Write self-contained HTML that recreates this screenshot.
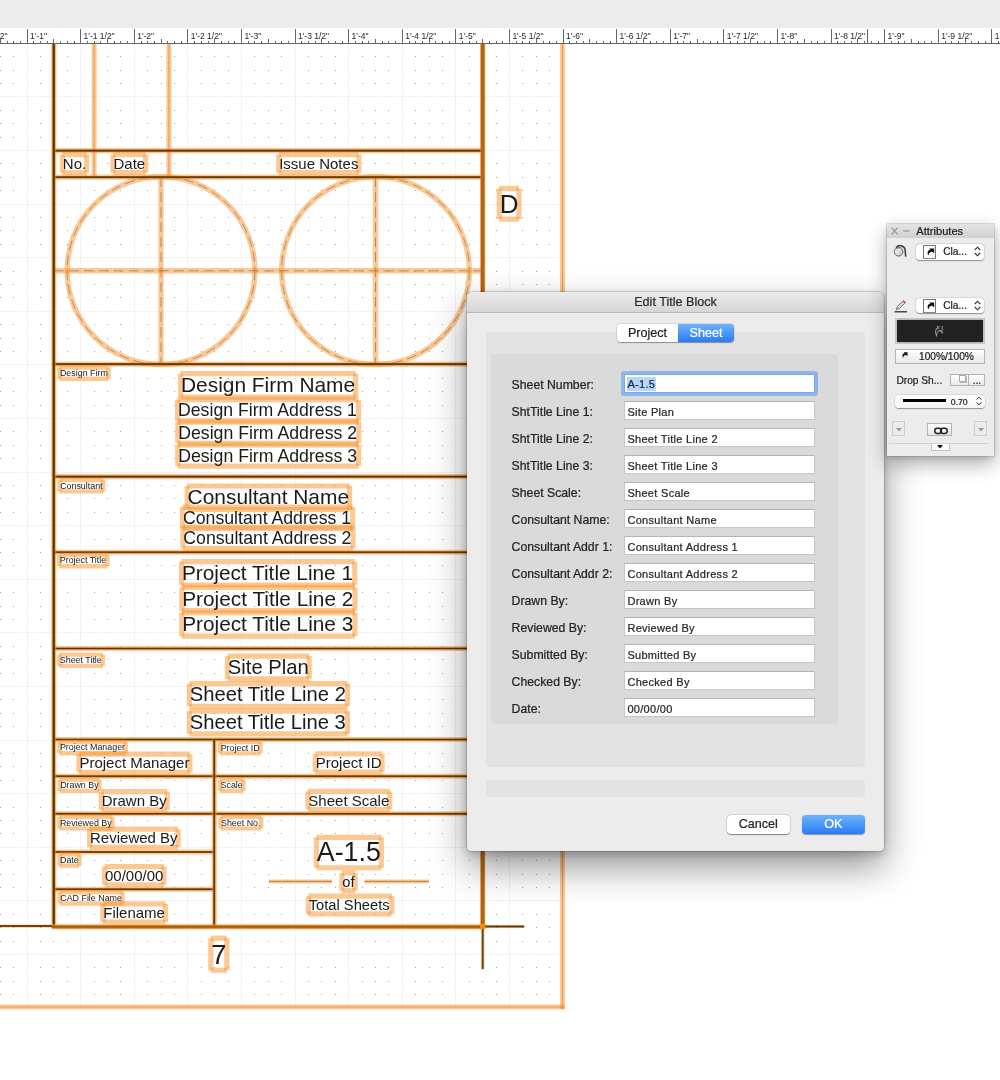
<!DOCTYPE html>
<html><head><meta charset="utf-8"><title>Edit Title Block</title>
<style>
html,body{margin:0;padding:0;background:#fff;}
body{width:1000px;height:1080px;position:relative;overflow:hidden;font-family:"Liberation Sans",sans-serif;color:#222;}
.cv{position:absolute;left:0;top:0;display:block;will-change:transform}
.dlg,.ap{will-change:transform;-webkit-text-stroke:0.22px currentColor}
.dlg{position:absolute;left:467px;top:292px;width:417px;height:559px;background:#ececec;border-radius:5px 5px 4px 4px;box-shadow:0 0 0 0.5px rgba(0,0,0,.3),0 16px 36px rgba(0,0,0,.42),0 3px 10px rgba(0,0,0,.2);}
.dlg .tb{position:absolute;left:0;top:0;right:0;height:19.5px;border-radius:5px 5px 0 0;background:linear-gradient(#ebebeb,#d6d6d6);border-bottom:1px solid #b9b9b9;text-align:center;font-size:12.6px;line-height:21px;color:#2a2a2a}
.g1{position:absolute;left:18.5px;top:40px;width:379px;height:434.5px;background:#e3e3e3;border-radius:4px}
.g2{position:absolute;left:24.3px;top:62.1px;width:347px;height:370.3px;background:#dadada;border-radius:4px}
.g3{position:absolute;left:18.5px;top:488px;width:379px;height:17px;background:#e3e3e3;border-radius:4px}
.tabs{position:absolute;left:150px;top:32px;height:18px;display:flex;font-size:12.6px;line-height:18px;border-radius:4px;box-shadow:0 0.5px 1px rgba(0,0,0,.35),0 0 0 0.5px rgba(0,0,0,.12)}
.tabs div{text-align:center}
.t1{width:61px;background:#fff;border-radius:4px 0 0 4px;color:#222}
.t2{width:56px;background:linear-gradient(#6db3fb,#2b7bf5);border-radius:0 4px 4px 0;color:#fff}
.lb{position:absolute;left:44.6px;font-size:12.25px;line-height:17.4px;white-space:nowrap;color:#222}
.in{position:absolute;left:157px;width:186.6px;height:17px;border:1px solid #c6c6c6;border-top-color:#b4b4b4;background:#fff;font-size:11px;letter-spacing:0.3px;line-height:20.4px;overflow:hidden;padding-left:2.4px;white-space:nowrap;color:#262626}
.foc{left:157px;width:186.6px;height:17px;border-color:#7aa7e6;box-shadow:0 0 0 3px #8fb6ea;border-radius:1px}
.sel{background:#b3d7ff;display:inline-block;line-height:14.5px;padding:0 0.5px;margin-left:-0.5px;vertical-align:top;margin-top:1.6px}
.btn{position:absolute;top:523px;height:18.5px;border-radius:4px;font-size:12.6px;line-height:18.5px;text-align:center}
.b1{left:260px;width:62.5px;background:#fff;box-shadow:0 0.5px 1px rgba(0,0,0,.4),0 0 0 0.5px rgba(0,0,0,.14);color:#222}
.b2{left:334.5px;width:63.5px;background:linear-gradient(#6db3fb,#2b7bf5);color:#fff;box-shadow:0 0.5px 1px rgba(0,0,40,.4)}
.ap{position:absolute;left:886.6px;top:223.7px;width:107px;height:232.3px;background:#ececec;box-shadow:0 0 0 0.5px rgba(0,0,0,.22),0 8px 18px rgba(0,0,0,.32),0 2px 6px rgba(0,0,0,.12);font-size:10.4px;color:#222}
.atb{position:absolute;left:0;top:0;right:0;height:14px;background:linear-gradient(#e4e4e4,#d0d0d0);}
.atb span{position:absolute;left:29.3px;top:0;font-size:11.1px;line-height:14.2px;color:#1e1e1e}
.ic{position:absolute}
.dd{position:absolute;left:29.1px;width:67.5px;height:15.6px;background:#fff;border-radius:3.5px;box-shadow:0 0.5px 1px rgba(0,0,0,.35),0 0 0 0.5px rgba(0,0,0,.1)}
.dd .cb{position:absolute;left:7px;top:1.4px;width:11.4px;height:11.6px;border:0.8px solid #777;border-bottom:1.2px solid #888;background:#fff;display:block}
.dd .cb svg{position:absolute;left:-0.4px;top:-0.4px}
.dd b{position:absolute;left:27.1px;top:0;font-weight:normal;font-size:10.2px;line-height:16px;color:#222}
.dd .ch{position:absolute;left:58.2px;top:2.4px}
.blk{position:absolute;left:7.8px;top:93.6px;width:88.3px;height:24.1px;border:1px solid #c4c4c4;background:#222;box-shadow:inset 0 0 0 0.8px #e6e6e6}
.pct{position:absolute;left:7.8px;top:124.8px;width:88.3px;height:12.8px;border:1px solid #b3b3b3;background:linear-gradient(#fff,#e9e9e9)}
.pct span{position:absolute;left:23.2px;top:0;font-size:10.2px;line-height:13.4px;color:#1c1c1c}
.ds{position:absolute;left:9.4px;top:150.5px;font-size:10.2px;line-height:12px;white-space:nowrap}
.dsb{position:absolute;left:63.4px;top:149.6px;width:32.7px;height:10.2px;border:1px solid #b3b3b3;background:linear-gradient(#fff,#e9e9e9)}
.dsb i{position:absolute;left:7.6px;top:0.8px;width:4.6px;height:4.6px;background:#fff;border:0.7px solid #aaa;box-shadow:1px 1px 0 #bbb}
.dsb u{position:absolute;left:16.8px;top:0;width:1px;height:10.2px;background:#b3b3b3}
.dsb b{position:absolute;left:21.4px;top:0.2px;font-weight:normal;font-size:10px;line-height:12px}
.lw{position:absolute;left:7.8px;top:170.9px;width:90.1px;height:13px;background:linear-gradient(#fff,#f4f4f4);border-radius:4px;box-shadow:0 0.5px 1px rgba(0,0,0,.35),0 0 0 0.5px rgba(0,0,0,.1)}
.lw i{position:absolute;left:8.5px;top:4.6px;width:43.1px;height:3px;background:#000}
.lw b{position:absolute;left:56px;top:0;font-weight:normal;font-size:8.7px;line-height:14.2px}
.lw .ch2{position:absolute;left:81.6px;top:1.6px}
.bb{position:absolute;border:1px solid #ccc;background:#ececec;box-sizing:border-box}
.sep{position:absolute;left:2.4px;right:4.6px;top:219.4px;height:1px;background:#d2d2d2}
.sb{position:absolute;left:44.4px;top:219.5px;width:16.8px;height:6.2px;border:0.8px solid #c2c2c2;border-top:none;background:#fff}
</style></head><body>
<svg class="cv" width="1000" height="1080" viewBox="0 0 1000 1080" font-family="'Liberation Sans', sans-serif">
<defs>
<clipPath id="pg"><rect x="0" y="44" width="562.5" height="963"/></clipPath>
<g id="r" fill="#a6a6a6"><rect x="0" y="0" width="1" height="1"/><rect x="13" y="0" width="1" height="1"/><rect x="27" y="0" width="1" height="1" fill="#e2e2e2"/><rect x="40" y="0" width="1" height="1"/><rect x="53" y="0" width="1" height="1"/><rect x="67" y="0" width="1" height="1"/><rect x="80" y="0" width="1" height="1" fill="#e2e2e2"/><rect x="94" y="0" width="1" height="1"/><rect x="107" y="0" width="1" height="1"/><rect x="120" y="0" width="1" height="1"/><rect x="134" y="0" width="1" height="1" fill="#e2e2e2"/><rect x="147" y="0" width="1" height="1"/><rect x="161" y="0" width="1" height="1"/><rect x="174" y="0" width="1" height="1"/><rect x="187" y="0" width="1" height="1" fill="#e2e2e2"/><rect x="201" y="0" width="1" height="1"/><rect x="214" y="0" width="1" height="1"/><rect x="228" y="0" width="1" height="1"/><rect x="241" y="0" width="1" height="1" fill="#e2e2e2"/><rect x="254" y="0" width="1" height="1"/><rect x="268" y="0" width="1" height="1"/><rect x="281" y="0" width="1" height="1"/><rect x="295" y="0" width="1" height="1" fill="#e2e2e2"/><rect x="308" y="0" width="1" height="1"/><rect x="321" y="0" width="1" height="1"/><rect x="335" y="0" width="1" height="1"/><rect x="348" y="0" width="1" height="1" fill="#e2e2e2"/><rect x="362" y="0" width="1" height="1"/><rect x="375" y="0" width="1" height="1"/><rect x="388" y="0" width="1" height="1"/><rect x="402" y="0" width="1" height="1" fill="#e2e2e2"/><rect x="415" y="0" width="1" height="1"/><rect x="429" y="0" width="1" height="1"/><rect x="442" y="0" width="1" height="1"/><rect x="455" y="0" width="1" height="1" fill="#e2e2e2"/><rect x="469" y="0" width="1" height="1"/><rect x="482" y="0" width="1" height="1"/><rect x="496" y="0" width="1" height="1"/><rect x="509" y="0" width="1" height="1" fill="#e2e2e2"/><rect x="522" y="0" width="1" height="1"/><rect x="536" y="0" width="1" height="1"/><rect x="549" y="0" width="1" height="1"/></g><g id="rm" fill="#e4e4e4"><rect x="0" y="0" width="1" height="1"/><rect x="13" y="0" width="1" height="1"/><rect x="27" y="0" width="1" height="1"/><rect x="40" y="0" width="1" height="1"/><rect x="53" y="0" width="1" height="1"/><rect x="67" y="0" width="1" height="1"/><rect x="80" y="0" width="1" height="1"/><rect x="94" y="0" width="1" height="1"/><rect x="107" y="0" width="1" height="1"/><rect x="120" y="0" width="1" height="1"/><rect x="134" y="0" width="1" height="1"/><rect x="147" y="0" width="1" height="1"/><rect x="161" y="0" width="1" height="1"/><rect x="174" y="0" width="1" height="1"/><rect x="187" y="0" width="1" height="1"/><rect x="201" y="0" width="1" height="1"/><rect x="214" y="0" width="1" height="1"/><rect x="228" y="0" width="1" height="1"/><rect x="241" y="0" width="1" height="1"/><rect x="254" y="0" width="1" height="1"/><rect x="268" y="0" width="1" height="1"/><rect x="281" y="0" width="1" height="1"/><rect x="295" y="0" width="1" height="1"/><rect x="308" y="0" width="1" height="1"/><rect x="321" y="0" width="1" height="1"/><rect x="335" y="0" width="1" height="1"/><rect x="348" y="0" width="1" height="1"/><rect x="362" y="0" width="1" height="1"/><rect x="375" y="0" width="1" height="1"/><rect x="388" y="0" width="1" height="1"/><rect x="402" y="0" width="1" height="1"/><rect x="415" y="0" width="1" height="1"/><rect x="429" y="0" width="1" height="1"/><rect x="442" y="0" width="1" height="1"/><rect x="455" y="0" width="1" height="1"/><rect x="469" y="0" width="1" height="1"/><rect x="482" y="0" width="1" height="1"/><rect x="496" y="0" width="1" height="1"/><rect x="509" y="0" width="1" height="1"/><rect x="522" y="0" width="1" height="1"/><rect x="536" y="0" width="1" height="1"/><rect x="549" y="0" width="1" height="1"/></g>
</defs>
<rect x="0" y="0" width="1000" height="1080" fill="#fff"/>
<g clip-path="url(#pg)" shape-rendering="crispEdges">
<g fill="#f4f4f4"><rect x="27" y="44" width="1" height="964"/><rect x="80" y="44" width="1" height="964"/><rect x="134" y="44" width="1" height="964"/><rect x="187" y="44" width="1" height="964"/><rect x="241" y="44" width="1" height="964"/><rect x="295" y="44" width="1" height="964"/><rect x="348" y="44" width="1" height="964"/><rect x="402" y="44" width="1" height="964"/><rect x="455" y="44" width="1" height="964"/><rect x="509" y="44" width="1" height="964"/><rect x="0" y="96" width="563" height="1"/><rect x="0" y="150" width="563" height="1"/><rect x="0" y="204" width="563" height="1"/><rect x="0" y="257" width="563" height="1"/><rect x="0" y="311" width="563" height="1"/><rect x="0" y="364" width="563" height="1"/><rect x="0" y="418" width="563" height="1"/><rect x="0" y="472" width="563" height="1"/><rect x="0" y="525" width="563" height="1"/><rect x="0" y="579" width="563" height="1"/><rect x="0" y="632" width="563" height="1"/><rect x="0" y="686" width="563" height="1"/><rect x="0" y="740" width="563" height="1"/><rect x="0" y="793" width="563" height="1"/><rect x="0" y="847" width="563" height="1"/><rect x="0" y="900" width="563" height="1"/><rect x="0" y="954" width="563" height="1"/></g>
<use href="#r" y="56"/><use href="#r" y="70"/><use href="#r" y="83"/><use href="#rm" y="96"/><use href="#r" y="110"/><use href="#r" y="123"/><use href="#r" y="137"/><use href="#rm" y="150"/><use href="#r" y="163"/><use href="#r" y="177"/><use href="#r" y="190"/><use href="#rm" y="204"/><use href="#r" y="217"/><use href="#r" y="230"/><use href="#r" y="244"/><use href="#rm" y="257"/><use href="#r" y="271"/><use href="#r" y="284"/><use href="#r" y="297"/><use href="#rm" y="311"/><use href="#r" y="324"/><use href="#r" y="338"/><use href="#r" y="351"/><use href="#rm" y="364"/><use href="#r" y="378"/><use href="#r" y="391"/><use href="#r" y="405"/><use href="#rm" y="418"/><use href="#r" y="431"/><use href="#r" y="445"/><use href="#r" y="458"/><use href="#rm" y="472"/><use href="#r" y="485"/><use href="#r" y="498"/><use href="#r" y="512"/><use href="#rm" y="525"/><use href="#r" y="539"/><use href="#r" y="552"/><use href="#r" y="565"/><use href="#rm" y="579"/><use href="#r" y="592"/><use href="#r" y="606"/><use href="#r" y="619"/><use href="#rm" y="632"/><use href="#r" y="646"/><use href="#r" y="659"/><use href="#r" y="673"/><use href="#rm" y="686"/><use href="#r" y="699"/><use href="#r" y="713"/><use href="#r" y="726"/><use href="#rm" y="740"/><use href="#r" y="753"/><use href="#r" y="766"/><use href="#r" y="780"/><use href="#rm" y="793"/><use href="#r" y="807"/><use href="#r" y="820"/><use href="#r" y="833"/><use href="#rm" y="847"/><use href="#r" y="860"/><use href="#r" y="874"/><use href="#r" y="887"/><use href="#rm" y="900"/><use href="#r" y="914"/><use href="#r" y="927"/><use href="#r" y="941"/><use href="#rm" y="954"/><use href="#r" y="967"/><use href="#r" y="981"/><use href="#r" y="994"/>
</g>
<line x1="562.5" y1="43.5" x2="562.5" y2="1009" stroke="#f9932b" stroke-opacity="0.5" stroke-width="5"/>
<line x1="562.5" y1="43.5" x2="562.5" y2="1009" stroke="#d98a3a" stroke-opacity="0.7" stroke-width="1"/>
<line x1="0" y1="1007" x2="564.5" y2="1007" stroke="#f9932b" stroke-opacity="0.5" stroke-width="5"/>
<line x1="0" y1="1007" x2="564.5" y2="1007" stroke="#d98a3a" stroke-opacity="0.7" stroke-width="1"/>
<line x1="94.1" y1="43.5" x2="94.1" y2="177.2" stroke="#f9932b" stroke-opacity="0.5" stroke-width="5"/>
<line x1="94.1" y1="43.5" x2="94.1" y2="177.2" stroke="#d98a3a" stroke-opacity="0.7" stroke-width="1"/>
<line x1="168.9" y1="43.5" x2="168.9" y2="177.2" stroke="#f9932b" stroke-opacity="0.5" stroke-width="5"/>
<line x1="168.9" y1="43.5" x2="168.9" y2="177.2" stroke="#d98a3a" stroke-opacity="0.7" stroke-width="1"/>
<circle cx="161" cy="270.6" r="93.9" fill="none" stroke="#f9932b" stroke-opacity="0.5" stroke-width="5.4"/>
<circle cx="161" cy="270.6" r="93.9" fill="none" stroke="#7a6548" stroke-opacity="0.75" stroke-width="0.8" stroke-dasharray="10 5"/>
<line x1="161" y1="177.2" x2="161" y2="364.1" stroke="#f9932b" stroke-opacity="0.5" stroke-width="5.4"/>
<line x1="161" y1="177.2" x2="161" y2="364.1" stroke="#7a6548" stroke-opacity="0.75" stroke-width="0.8" stroke-dasharray="10 5"/>
<circle cx="375.5" cy="270.6" r="93.9" fill="none" stroke="#f9932b" stroke-opacity="0.5" stroke-width="5.4"/>
<circle cx="375.5" cy="270.6" r="93.9" fill="none" stroke="#7a6548" stroke-opacity="0.75" stroke-width="0.8" stroke-dasharray="10 5"/>
<line x1="375.5" y1="177.2" x2="375.5" y2="364.1" stroke="#f9932b" stroke-opacity="0.5" stroke-width="5.4"/>
<line x1="375.5" y1="177.2" x2="375.5" y2="364.1" stroke="#7a6548" stroke-opacity="0.75" stroke-width="0.8" stroke-dasharray="10 5"/>
<line x1="53.75" y1="270.8" x2="482.5" y2="270.8" stroke="#f9932b" stroke-opacity="0.5" stroke-width="5.4"/>
<line x1="53.75" y1="270.8" x2="482.5" y2="270.8" stroke="#7a6548" stroke-opacity="0.75" stroke-width="0.8" stroke-dasharray="10 5"/>
<line x1="268.75" y1="881.4" x2="332" y2="881.4" stroke="#f9932b" stroke-opacity="0.5" stroke-width="4"/>
<line x1="268.75" y1="881.4" x2="332" y2="881.4" stroke="#a06a2a" stroke-opacity="0.85" stroke-width="0.9"/>
<line x1="364.5" y1="881.4" x2="428.75" y2="881.4" stroke="#f9932b" stroke-opacity="0.5" stroke-width="4"/>
<line x1="364.5" y1="881.4" x2="428.75" y2="881.4" stroke="#a06a2a" stroke-opacity="0.85" stroke-width="0.9"/>
<line x1="53.75" y1="150.6" x2="482.5" y2="150.6" stroke="#f9932b" stroke-opacity="0.5" stroke-width="5.2"/>
<line x1="53.75" y1="150.6" x2="482.5" y2="150.6" stroke="#96560f" stroke-width="2.1"/>
<line x1="53.75" y1="150.6" x2="482.5" y2="150.6" stroke="#5a3407" stroke-width="1.16"/>
<line x1="53.75" y1="177.2" x2="482.5" y2="177.2" stroke="#f9932b" stroke-opacity="0.5" stroke-width="5.2"/>
<line x1="53.75" y1="177.2" x2="482.5" y2="177.2" stroke="#96560f" stroke-width="2.1"/>
<line x1="53.75" y1="177.2" x2="482.5" y2="177.2" stroke="#5a3407" stroke-width="1.16"/>
<line x1="53.75" y1="364.1" x2="482.5" y2="364.1" stroke="#f9932b" stroke-opacity="0.5" stroke-width="5.2"/>
<line x1="53.75" y1="364.1" x2="482.5" y2="364.1" stroke="#96560f" stroke-width="2.1"/>
<line x1="53.75" y1="364.1" x2="482.5" y2="364.1" stroke="#5a3407" stroke-width="1.16"/>
<line x1="53.75" y1="476.6" x2="482.5" y2="476.6" stroke="#f9932b" stroke-opacity="0.5" stroke-width="5.2"/>
<line x1="53.75" y1="476.6" x2="482.5" y2="476.6" stroke="#96560f" stroke-width="2.1"/>
<line x1="53.75" y1="476.6" x2="482.5" y2="476.6" stroke="#5a3407" stroke-width="1.16"/>
<line x1="53.75" y1="552.25" x2="482.5" y2="552.25" stroke="#f9932b" stroke-opacity="0.5" stroke-width="5.2"/>
<line x1="53.75" y1="552.25" x2="482.5" y2="552.25" stroke="#96560f" stroke-width="2.1"/>
<line x1="53.75" y1="552.25" x2="482.5" y2="552.25" stroke="#5a3407" stroke-width="1.16"/>
<line x1="53.75" y1="648.5" x2="482.5" y2="648.5" stroke="#f9932b" stroke-opacity="0.5" stroke-width="5.2"/>
<line x1="53.75" y1="648.5" x2="482.5" y2="648.5" stroke="#96560f" stroke-width="2.1"/>
<line x1="53.75" y1="648.5" x2="482.5" y2="648.5" stroke="#5a3407" stroke-width="1.16"/>
<line x1="53.75" y1="739.5" x2="482.5" y2="739.5" stroke="#f9932b" stroke-opacity="0.5" stroke-width="5.2"/>
<line x1="53.75" y1="739.5" x2="482.5" y2="739.5" stroke="#96560f" stroke-width="2.1"/>
<line x1="53.75" y1="739.5" x2="482.5" y2="739.5" stroke="#5a3407" stroke-width="1.16"/>
<line x1="53.75" y1="776.25" x2="482.5" y2="776.25" stroke="#f9932b" stroke-opacity="0.5" stroke-width="5.2"/>
<line x1="53.75" y1="776.25" x2="482.5" y2="776.25" stroke="#96560f" stroke-width="2.1"/>
<line x1="53.75" y1="776.25" x2="482.5" y2="776.25" stroke="#5a3407" stroke-width="1.16"/>
<line x1="53.75" y1="813.75" x2="482.5" y2="813.75" stroke="#f9932b" stroke-opacity="0.5" stroke-width="5.2"/>
<line x1="53.75" y1="813.75" x2="482.5" y2="813.75" stroke="#96560f" stroke-width="2.1"/>
<line x1="53.75" y1="813.75" x2="482.5" y2="813.75" stroke="#5a3407" stroke-width="1.16"/>
<line x1="53.75" y1="852" x2="214.25" y2="852" stroke="#f9932b" stroke-opacity="0.5" stroke-width="5.2"/>
<line x1="53.75" y1="852" x2="214.25" y2="852" stroke="#96560f" stroke-width="2.1"/>
<line x1="53.75" y1="852" x2="214.25" y2="852" stroke="#5a3407" stroke-width="1.16"/>
<line x1="53.75" y1="889.25" x2="214.25" y2="889.25" stroke="#f9932b" stroke-opacity="0.5" stroke-width="5.2"/>
<line x1="53.75" y1="889.25" x2="214.25" y2="889.25" stroke="#96560f" stroke-width="2.1"/>
<line x1="53.75" y1="889.25" x2="214.25" y2="889.25" stroke="#5a3407" stroke-width="1.16"/>
<line x1="214.25" y1="739.5" x2="214.25" y2="926.5" stroke="#f9932b" stroke-opacity="0.5" stroke-width="5.2"/>
<line x1="214.25" y1="739.5" x2="214.25" y2="926.5" stroke="#96560f" stroke-width="2.1"/>
<line x1="214.25" y1="739.5" x2="214.25" y2="926.5" stroke="#5a3407" stroke-width="1.16"/>
<line x1="53.75" y1="43.5" x2="53.75" y2="928.0" stroke="#f9932b" stroke-opacity="0.5" stroke-width="5.2"/>
<line x1="53.75" y1="43.5" x2="53.75" y2="928.0" stroke="#96560f" stroke-width="2.8"/>
<line x1="53.75" y1="43.5" x2="53.75" y2="928.0" stroke="#5a3407" stroke-width="1.54"/>
<line x1="482.7" y1="43.5" x2="482.7" y2="928.0" stroke="#f9932b" stroke-opacity="0.5" stroke-width="5.4"/>
<line x1="482.7" y1="43.5" x2="482.7" y2="928.0" stroke="#b1660f" stroke-width="3.9"/>
<line x1="0" y1="926.1" x2="53.75" y2="926.1" stroke="#f9932b" stroke-opacity="0.35" stroke-width="3.6"/>
<line x1="0" y1="926.1" x2="53.75" y2="926.1" stroke="#6e440e" stroke-width="2"/>
<line x1="51.75" y1="926.8" x2="484.5" y2="926.8" stroke="#f9932b" stroke-opacity="0.5" stroke-width="5.6"/>
<line x1="51.75" y1="926.8" x2="484.5" y2="926.8" stroke="#c06e0c" stroke-width="3.2"/>
<line x1="51.75" y1="926.8" x2="484.5" y2="926.8" stroke="#a85c0a" stroke-width="1.4"/>
<line x1="484.5" y1="926.5" x2="523.5" y2="926.5" stroke="#f9932b" stroke-opacity="0.35" stroke-width="3.6"/>
<line x1="484.5" y1="926.5" x2="523.5" y2="926.5" stroke="#5e3a0c" stroke-width="2" stroke-linecap="round"/>
<line x1="482.7" y1="928.5" x2="482.7" y2="968.5" stroke="#f9932b" stroke-opacity="0.35" stroke-width="3.6"/>
<line x1="482.7" y1="928.5" x2="482.7" y2="968.5" stroke="#6e440e" stroke-width="2" stroke-linecap="round"/>
<rect x="480.1" y="923.9" width="5.2" height="5.2" fill="#f08a10"/>
<g stroke="#f9932b" stroke-opacity="0.5" stroke-width="5.2"><line x1="62.40" y1="154.63" x2="86.64" y2="154.63"/><line x1="62.40" y1="172.68" x2="86.64" y2="172.68"/><line x1="62.40" y1="154.63" x2="62.40" y2="172.68"/><line x1="86.64" y1="154.63" x2="86.64" y2="172.68"/><line x1="113.07" y1="154.63" x2="145.66" y2="154.63"/><line x1="113.07" y1="172.68" x2="145.66" y2="172.68"/><line x1="113.07" y1="154.63" x2="113.07" y2="172.68"/><line x1="145.66" y1="154.63" x2="145.66" y2="172.68"/><line x1="278.78" y1="154.63" x2="358.88" y2="154.63"/><line x1="278.78" y1="172.68" x2="358.88" y2="172.68"/><line x1="278.78" y1="154.63" x2="278.78" y2="172.68"/><line x1="358.88" y1="154.63" x2="358.88" y2="172.68"/><line x1="499.26" y1="188.41" x2="518.93" y2="188.41"/><line x1="499.26" y1="219.11" x2="518.93" y2="219.11"/><line x1="499.26" y1="188.41" x2="499.26" y2="219.11"/><line x1="518.93" y1="188.41" x2="518.93" y2="219.11"/><line x1="180.61" y1="373.65" x2="355.69" y2="373.65"/><line x1="180.61" y1="397.13" x2="355.69" y2="397.13"/><line x1="180.61" y1="373.65" x2="180.61" y2="397.13"/><line x1="355.69" y1="373.65" x2="355.69" y2="397.13"/><line x1="177.61" y1="399.65" x2="358.49" y2="399.65"/><line x1="177.61" y1="420.80" x2="358.49" y2="420.80"/><line x1="177.61" y1="399.65" x2="177.61" y2="420.80"/><line x1="358.49" y1="399.65" x2="358.49" y2="420.80"/><line x1="177.83" y1="422.15" x2="358.71" y2="422.15"/><line x1="177.83" y1="443.30" x2="358.71" y2="443.30"/><line x1="177.83" y1="422.15" x2="177.83" y2="443.30"/><line x1="358.71" y1="422.15" x2="358.71" y2="443.30"/><line x1="177.77" y1="445.00" x2="358.64" y2="445.00"/><line x1="177.77" y1="466.15" x2="358.64" y2="466.15"/><line x1="177.77" y1="445.00" x2="177.77" y2="466.15"/><line x1="358.64" y1="445.00" x2="358.64" y2="466.15"/><line x1="187.21" y1="486.00" x2="349.56" y2="486.00"/><line x1="187.21" y1="509.48" x2="349.56" y2="509.48"/><line x1="187.21" y1="486.00" x2="187.21" y2="509.48"/><line x1="349.56" y1="486.00" x2="349.56" y2="509.48"/><line x1="182.59" y1="507.15" x2="352.68" y2="507.15"/><line x1="182.59" y1="528.30" x2="352.68" y2="528.30"/><line x1="182.59" y1="507.15" x2="182.59" y2="528.30"/><line x1="352.68" y1="507.15" x2="352.68" y2="528.30"/><line x1="182.90" y1="527.15" x2="353.00" y2="527.15"/><line x1="182.90" y1="548.30" x2="353.00" y2="548.30"/><line x1="182.90" y1="527.15" x2="182.90" y2="548.30"/><line x1="353.00" y1="527.15" x2="353.00" y2="548.30"/><line x1="181.53" y1="561.64" x2="354.66" y2="561.64"/><line x1="181.53" y1="585.01" x2="354.66" y2="585.01"/><line x1="181.53" y1="561.64" x2="181.53" y2="585.01"/><line x1="354.66" y1="561.64" x2="354.66" y2="585.01"/><line x1="181.86" y1="587.34" x2="354.98" y2="587.34"/><line x1="181.86" y1="610.71" x2="354.98" y2="610.71"/><line x1="181.86" y1="587.34" x2="181.86" y2="610.71"/><line x1="354.98" y1="587.34" x2="354.98" y2="610.71"/><line x1="181.78" y1="612.84" x2="354.91" y2="612.84"/><line x1="181.78" y1="636.21" x2="354.91" y2="636.21"/><line x1="181.78" y1="612.84" x2="181.78" y2="636.21"/><line x1="354.91" y1="612.84" x2="354.91" y2="636.21"/><line x1="227.47" y1="656.12" x2="309.21" y2="656.12"/><line x1="227.47" y1="678.83" x2="309.21" y2="678.83"/><line x1="227.47" y1="656.12" x2="227.47" y2="678.83"/><line x1="309.21" y1="656.12" x2="309.21" y2="678.83"/><line x1="189.46" y1="683.62" x2="347.54" y2="683.62"/><line x1="189.46" y1="706.33" x2="347.54" y2="706.33"/><line x1="189.46" y1="683.62" x2="189.46" y2="706.33"/><line x1="347.54" y1="683.62" x2="347.54" y2="706.33"/><line x1="189.39" y1="711.12" x2="347.47" y2="711.12"/><line x1="189.39" y1="733.83" x2="347.47" y2="733.83"/><line x1="189.39" y1="711.12" x2="189.39" y2="733.83"/><line x1="347.47" y1="711.12" x2="347.47" y2="733.83"/><line x1="78.98" y1="754.18" x2="189.93" y2="754.18"/><line x1="78.98" y1="772.23" x2="189.93" y2="772.23"/><line x1="78.98" y1="754.18" x2="78.98" y2="772.23"/><line x1="189.93" y1="754.18" x2="189.93" y2="772.23"/><line x1="315.31" y1="753.93" x2="382.06" y2="753.93"/><line x1="315.31" y1="771.98" x2="382.06" y2="771.98"/><line x1="315.31" y1="753.93" x2="315.31" y2="771.98"/><line x1="382.06" y1="753.93" x2="382.06" y2="771.98"/><line x1="101.29" y1="791.68" x2="167.20" y2="791.68"/><line x1="101.29" y1="809.73" x2="167.20" y2="809.73"/><line x1="101.29" y1="791.68" x2="101.29" y2="809.73"/><line x1="167.20" y1="791.68" x2="167.20" y2="809.73"/><line x1="307.95" y1="791.43" x2="389.73" y2="791.43"/><line x1="307.95" y1="809.48" x2="389.73" y2="809.48"/><line x1="307.95" y1="791.43" x2="307.95" y2="809.48"/><line x1="389.73" y1="791.43" x2="389.73" y2="809.48"/><line x1="89.64" y1="829.18" x2="178.06" y2="829.18"/><line x1="89.64" y1="847.23" x2="178.06" y2="847.23"/><line x1="89.64" y1="829.18" x2="89.64" y2="847.23"/><line x1="178.06" y1="829.18" x2="178.06" y2="847.23"/><line x1="316.40" y1="837.40" x2="381.35" y2="837.40"/><line x1="316.40" y1="867.73" x2="381.35" y2="867.73"/><line x1="316.40" y1="837.40" x2="316.40" y2="867.73"/><line x1="381.35" y1="837.40" x2="381.35" y2="867.73"/><line x1="341.95" y1="872.96" x2="355.11" y2="872.96"/><line x1="341.95" y1="890.67" x2="355.11" y2="890.67"/><line x1="341.95" y1="872.96" x2="341.95" y2="890.67"/><line x1="355.11" y1="872.96" x2="355.11" y2="890.67"/><line x1="308.35" y1="896.21" x2="391.76" y2="896.21"/><line x1="308.35" y1="913.92" x2="391.76" y2="913.92"/><line x1="308.35" y1="896.21" x2="308.35" y2="913.92"/><line x1="391.76" y1="896.21" x2="391.76" y2="913.92"/><line x1="104.60" y1="866.68" x2="163.88" y2="866.68"/><line x1="104.60" y1="884.73" x2="163.88" y2="884.73"/><line x1="104.60" y1="866.68" x2="104.60" y2="884.73"/><line x1="163.88" y1="866.68" x2="163.88" y2="884.73"/><line x1="102.88" y1="903.93" x2="165.46" y2="903.93"/><line x1="102.88" y1="921.98" x2="165.46" y2="921.98"/><line x1="102.88" y1="903.93" x2="102.88" y2="921.98"/><line x1="165.46" y1="903.93" x2="165.46" y2="921.98"/><line x1="210.82" y1="938.24" x2="226.85" y2="938.24"/><line x1="210.82" y1="970.32" x2="226.85" y2="970.32"/><line x1="210.82" y1="938.24" x2="210.82" y2="970.32"/><line x1="226.85" y1="938.24" x2="226.85" y2="970.32"/></g>
<g stroke="#f9932b" stroke-opacity="0.5" stroke-width="4.4"><line x1="59.34" y1="367.55" x2="108.51" y2="367.55"/><line x1="59.34" y1="378.79" x2="108.51" y2="378.79"/><line x1="59.34" y1="367.55" x2="59.34" y2="378.79"/><line x1="108.51" y1="367.55" x2="108.51" y2="378.79"/><line x1="59.54" y1="480.15" x2="103.28" y2="480.15"/><line x1="59.54" y1="491.39" x2="103.28" y2="491.39"/><line x1="59.54" y1="480.15" x2="59.54" y2="491.39"/><line x1="103.28" y1="480.15" x2="103.28" y2="491.39"/><line x1="59.19" y1="554.95" x2="107.37" y2="554.95"/><line x1="59.19" y1="566.19" x2="107.37" y2="566.19"/><line x1="59.19" y1="554.95" x2="59.19" y2="566.19"/><line x1="107.37" y1="554.95" x2="107.37" y2="566.19"/><line x1="59.23" y1="654.65" x2="102.96" y2="654.65"/><line x1="59.23" y1="665.89" x2="102.96" y2="665.89"/><line x1="59.23" y1="654.65" x2="59.23" y2="665.89"/><line x1="102.96" y1="654.65" x2="102.96" y2="665.89"/><line x1="59.36" y1="741.95" x2="125.85" y2="741.95"/><line x1="59.36" y1="753.19" x2="125.85" y2="753.19"/><line x1="59.36" y1="741.95" x2="59.36" y2="753.19"/><line x1="125.85" y1="741.95" x2="125.85" y2="753.19"/><line x1="220.11" y1="742.15" x2="260.38" y2="742.15"/><line x1="220.11" y1="753.39" x2="260.38" y2="753.39"/><line x1="220.11" y1="742.15" x2="220.11" y2="753.39"/><line x1="260.38" y1="742.15" x2="260.38" y2="753.39"/><line x1="59.56" y1="779.65" x2="99.33" y2="779.65"/><line x1="59.56" y1="790.89" x2="99.33" y2="790.89"/><line x1="59.56" y1="779.65" x2="59.56" y2="790.89"/><line x1="99.33" y1="779.65" x2="99.33" y2="790.89"/><line x1="219.97" y1="779.65" x2="243.42" y2="779.65"/><line x1="219.97" y1="790.89" x2="243.42" y2="790.89"/><line x1="219.97" y1="779.65" x2="219.97" y2="790.89"/><line x1="243.42" y1="779.65" x2="243.42" y2="790.89"/><line x1="59.28" y1="817.15" x2="112.41" y2="817.15"/><line x1="59.28" y1="828.39" x2="112.41" y2="828.39"/><line x1="59.28" y1="817.15" x2="59.28" y2="828.39"/><line x1="112.41" y1="817.15" x2="112.41" y2="828.39"/><line x1="220.42" y1="817.15" x2="261.19" y2="817.15"/><line x1="220.42" y1="828.39" x2="261.19" y2="828.39"/><line x1="220.42" y1="817.15" x2="220.42" y2="828.39"/><line x1="261.19" y1="817.15" x2="261.19" y2="828.39"/><line x1="59.43" y1="854.45" x2="79.43" y2="854.45"/><line x1="59.43" y1="865.69" x2="79.43" y2="865.69"/><line x1="59.43" y1="854.45" x2="59.43" y2="865.69"/><line x1="79.43" y1="854.45" x2="79.43" y2="865.69"/><line x1="59.67" y1="892.25" x2="122.68" y2="892.25"/><line x1="59.67" y1="903.49" x2="122.68" y2="903.49"/><line x1="59.67" y1="892.25" x2="59.67" y2="903.49"/><line x1="122.68" y1="892.25" x2="122.68" y2="903.49"/></g>
<g fill="#1a1a1a"><text x="62.80" y="168.70" font-size="15">No.</text><text x="113.47" y="168.70" font-size="15">Date</text><text x="279.18" y="168.70" font-size="15">Issue Notes</text><text x="499.66" y="212.80" font-size="26">D</text><text x="59.94" y="376.00" font-size="8.9">Design Firm</text><text x="181.01" y="391.90" font-size="20.9">Design Firm Name</text><text x="178.01" y="416.25" font-size="17.7">Design Firm Address 1</text><text x="178.23" y="438.75" font-size="17.7">Design Firm Address 2</text><text x="178.17" y="461.60" font-size="17.7">Design Firm Address 3</text><text x="60.14" y="488.60" font-size="8.9">Consultant</text><text x="187.61" y="504.25" font-size="20.9">Consultant Name</text><text x="182.99" y="523.75" font-size="17.7">Consultant Address 1</text><text x="183.30" y="543.75" font-size="17.7">Consultant Address 2</text><text x="59.79" y="563.40" font-size="8.9">Project Title</text><text x="181.93" y="579.80" font-size="20.8">Project Title Line 1</text><text x="182.26" y="605.50" font-size="20.8">Project Title Line 2</text><text x="182.18" y="631.00" font-size="20.8">Project Title Line 3</text><text x="59.83" y="663.10" font-size="8.9">Sheet Title</text><text x="227.87" y="673.75" font-size="20.2">Site Plan</text><text x="189.86" y="701.25" font-size="20.2">Sheet Title Line 2</text><text x="189.79" y="728.75" font-size="20.2">Sheet Title Line 3</text><text x="59.96" y="750.40" font-size="8.9">Project Manager</text><text x="79.39" y="768.25" font-size="15.0">Project Manager</text><text x="220.71" y="750.60" font-size="8.9">Project ID</text><text x="315.71" y="768.00" font-size="15.0">Project ID</text><text x="60.16" y="788.10" font-size="8.9">Drawn By</text><text x="101.69" y="805.75" font-size="15.0">Drawn By</text><text x="220.57" y="788.10" font-size="8.9">Scale</text><text x="308.35" y="805.50" font-size="15.0">Sheet Scale</text><text x="59.88" y="825.60" font-size="8.9">Reviewed By</text><text x="90.04" y="843.25" font-size="15.0">Reviewed By</text><text x="221.02" y="825.60" font-size="8.9">Sheet No.</text><text x="316.80" y="861.25" font-size="26.8">A-1.5</text><text x="342.35" y="886.75" font-size="14.7">of</text><text x="308.75" y="910.00" font-size="14.7">Total Sheets</text><text x="60.03" y="862.90" font-size="8.9">Date</text><text x="105.00" y="880.75" font-size="15.0">00/00/00</text><text x="60.27" y="900.70" font-size="8.9">CAD File Name</text><text x="103.28" y="918.00" font-size="15.0">Filename</text><text x="211.22" y="963.75" font-size="27.2">7</text></g>
<rect x="0" y="0" width="1000" height="28.2" fill="#ececec"/>
<rect x="0" y="28.2" width="1000" height="15" fill="#fff"/>
<g fill="#686868" shape-rendering="crispEdges"><rect x="0" y="43" width="1000" height="1"/><rect x="-27" y="29" width="1" height="14"/><rect x="-20" y="41" width="1" height="2"/><rect x="-14" y="41" width="1" height="2"/><rect x="-7" y="41" width="1" height="2"/><rect x="0" y="39" width="1" height="4"/><rect x="7" y="41" width="1" height="2"/><rect x="13" y="41" width="1" height="2"/><rect x="20" y="41" width="1" height="2"/><rect x="27" y="29" width="1" height="14"/><rect x="33" y="41" width="1" height="2"/><rect x="40" y="41" width="1" height="2"/><rect x="47" y="41" width="1" height="2"/><rect x="53" y="39" width="1" height="4"/><rect x="60" y="41" width="1" height="2"/><rect x="67" y="41" width="1" height="2"/><rect x="74" y="41" width="1" height="2"/><rect x="80" y="29" width="1" height="14"/><rect x="87" y="41" width="1" height="2"/><rect x="94" y="41" width="1" height="2"/><rect x="100" y="41" width="1" height="2"/><rect x="107" y="39" width="1" height="4"/><rect x="114" y="41" width="1" height="2"/><rect x="120" y="41" width="1" height="2"/><rect x="127" y="41" width="1" height="2"/><rect x="134" y="29" width="1" height="14"/><rect x="141" y="41" width="1" height="2"/><rect x="147" y="41" width="1" height="2"/><rect x="154" y="41" width="1" height="2"/><rect x="161" y="39" width="1" height="4"/><rect x="167" y="41" width="1" height="2"/><rect x="174" y="41" width="1" height="2"/><rect x="181" y="41" width="1" height="2"/><rect x="187" y="29" width="1" height="14"/><rect x="194" y="41" width="1" height="2"/><rect x="201" y="41" width="1" height="2"/><rect x="208" y="41" width="1" height="2"/><rect x="214" y="39" width="1" height="4"/><rect x="221" y="41" width="1" height="2"/><rect x="228" y="41" width="1" height="2"/><rect x="234" y="41" width="1" height="2"/><rect x="241" y="29" width="1" height="14"/><rect x="248" y="41" width="1" height="2"/><rect x="254" y="41" width="1" height="2"/><rect x="261" y="41" width="1" height="2"/><rect x="268" y="39" width="1" height="4"/><rect x="275" y="41" width="1" height="2"/><rect x="281" y="41" width="1" height="2"/><rect x="288" y="41" width="1" height="2"/><rect x="295" y="29" width="1" height="14"/><rect x="301" y="41" width="1" height="2"/><rect x="308" y="41" width="1" height="2"/><rect x="315" y="41" width="1" height="2"/><rect x="321" y="39" width="1" height="4"/><rect x="328" y="41" width="1" height="2"/><rect x="335" y="41" width="1" height="2"/><rect x="342" y="41" width="1" height="2"/><rect x="348" y="29" width="1" height="14"/><rect x="355" y="41" width="1" height="2"/><rect x="362" y="41" width="1" height="2"/><rect x="368" y="41" width="1" height="2"/><rect x="375" y="39" width="1" height="4"/><rect x="382" y="41" width="1" height="2"/><rect x="388" y="41" width="1" height="2"/><rect x="395" y="41" width="1" height="2"/><rect x="402" y="29" width="1" height="14"/><rect x="409" y="41" width="1" height="2"/><rect x="415" y="41" width="1" height="2"/><rect x="422" y="41" width="1" height="2"/><rect x="429" y="39" width="1" height="4"/><rect x="435" y="41" width="1" height="2"/><rect x="442" y="41" width="1" height="2"/><rect x="449" y="41" width="1" height="2"/><rect x="455" y="29" width="1" height="14"/><rect x="462" y="41" width="1" height="2"/><rect x="469" y="41" width="1" height="2"/><rect x="476" y="41" width="1" height="2"/><rect x="482" y="39" width="1" height="4"/><rect x="489" y="41" width="1" height="2"/><rect x="496" y="41" width="1" height="2"/><rect x="502" y="41" width="1" height="2"/><rect x="509" y="29" width="1" height="14"/><rect x="516" y="41" width="1" height="2"/><rect x="522" y="41" width="1" height="2"/><rect x="529" y="41" width="1" height="2"/><rect x="536" y="39" width="1" height="4"/><rect x="543" y="41" width="1" height="2"/><rect x="549" y="41" width="1" height="2"/><rect x="556" y="41" width="1" height="2"/><rect x="563" y="29" width="1" height="14"/><rect x="569" y="41" width="1" height="2"/><rect x="576" y="41" width="1" height="2"/><rect x="583" y="41" width="1" height="2"/><rect x="589" y="39" width="1" height="4"/><rect x="596" y="41" width="1" height="2"/><rect x="603" y="41" width="1" height="2"/><rect x="610" y="41" width="1" height="2"/><rect x="616" y="29" width="1" height="14"/><rect x="623" y="41" width="1" height="2"/><rect x="630" y="41" width="1" height="2"/><rect x="636" y="41" width="1" height="2"/><rect x="643" y="39" width="1" height="4"/><rect x="650" y="41" width="1" height="2"/><rect x="656" y="41" width="1" height="2"/><rect x="663" y="41" width="1" height="2"/><rect x="670" y="29" width="1" height="14"/><rect x="677" y="41" width="1" height="2"/><rect x="683" y="41" width="1" height="2"/><rect x="690" y="41" width="1" height="2"/><rect x="697" y="39" width="1" height="4"/><rect x="703" y="41" width="1" height="2"/><rect x="710" y="41" width="1" height="2"/><rect x="717" y="41" width="1" height="2"/><rect x="723" y="29" width="1" height="14"/><rect x="730" y="41" width="1" height="2"/><rect x="737" y="41" width="1" height="2"/><rect x="744" y="41" width="1" height="2"/><rect x="750" y="39" width="1" height="4"/><rect x="757" y="41" width="1" height="2"/><rect x="764" y="41" width="1" height="2"/><rect x="770" y="41" width="1" height="2"/><rect x="777" y="29" width="1" height="14"/><rect x="784" y="41" width="1" height="2"/><rect x="790" y="41" width="1" height="2"/><rect x="797" y="41" width="1" height="2"/><rect x="804" y="39" width="1" height="4"/><rect x="811" y="41" width="1" height="2"/><rect x="817" y="41" width="1" height="2"/><rect x="824" y="41" width="1" height="2"/><rect x="831" y="29" width="1" height="14"/><rect x="837" y="41" width="1" height="2"/><rect x="844" y="41" width="1" height="2"/><rect x="851" y="41" width="1" height="2"/><rect x="857" y="39" width="1" height="4"/><rect x="864" y="41" width="1" height="2"/><rect x="871" y="41" width="1" height="2"/><rect x="878" y="41" width="1" height="2"/><rect x="884" y="29" width="1" height="14"/><rect x="891" y="41" width="1" height="2"/><rect x="898" y="41" width="1" height="2"/><rect x="904" y="41" width="1" height="2"/><rect x="911" y="39" width="1" height="4"/><rect x="918" y="41" width="1" height="2"/><rect x="924" y="41" width="1" height="2"/><rect x="931" y="41" width="1" height="2"/><rect x="938" y="29" width="1" height="14"/><rect x="945" y="41" width="1" height="2"/><rect x="951" y="41" width="1" height="2"/><rect x="958" y="41" width="1" height="2"/><rect x="965" y="39" width="1" height="4"/><rect x="971" y="41" width="1" height="2"/><rect x="978" y="41" width="1" height="2"/><rect x="985" y="41" width="1" height="2"/><rect x="991" y="29" width="1" height="14"/><rect x="998" y="41" width="1" height="2"/><rect x="1005" y="41" width="1" height="2"/><rect x="1012" y="41" width="1" height="2"/><rect x="1018" y="39" width="1" height="4"/><rect x="1025" y="41" width="1" height="2"/><rect x="1032" y="41" width="1" height="2"/><rect x="1038" y="41" width="1" height="2"/><rect x="867" y="29" width="1" height="14"/></g>
<g fill="#1e1e1e" font-size="8.5"><text x="-23.60" y="38.8">1'-0 1/2&quot;</text><text x="30.00" y="38.8">1'-1&quot;</text><text x="83.60" y="38.8">1'-1 1/2&quot;</text><text x="137.20" y="38.8">1'-2&quot;</text><text x="190.80" y="38.8">1'-2 1/2&quot;</text><text x="244.40" y="38.8">1'-3&quot;</text><text x="298.00" y="38.8">1'-3 1/2&quot;</text><text x="351.60" y="38.8">1'-4&quot;</text><text x="405.20" y="38.8">1'-4 1/2&quot;</text><text x="458.80" y="38.8">1'-5&quot;</text><text x="512.40" y="38.8">1'-5 1/2&quot;</text><text x="566.00" y="38.8">1'-6&quot;</text><text x="619.60" y="38.8">1'-6 1/2&quot;</text><text x="673.20" y="38.8">1'-7&quot;</text><text x="726.80" y="38.8">1'-7 1/2&quot;</text><text x="780.40" y="38.8">1'-8&quot;</text><text x="834.00" y="38.8">1'-8 1/2&quot;</text><text x="887.60" y="38.8">1'-9&quot;</text><text x="941.20" y="38.8">1'-9 1/2&quot;</text><text x="994.80" y="38.8">1'-10&quot;</text></g>
</svg>
<div class="dlg">
<div class="tb">Edit Title Block</div>
<div class="g1"></div><div class="g2"></div><div class="g3"></div>
<div class="tabs"><div class="t1">Project</div><div class="t2">Sheet</div></div>
<div class="lb" style="top:84.90px">Sheet Number:</div>
<div class="in foc" style="top:82px"><span class="sel">A-1.5</span></div>
<div class="lb" style="top:111.90px">ShtTitle Line 1:</div>
<div class="in" style="top:109px">Site Plan</div>
<div class="lb" style="top:138.90px">ShtTitle Line 2:</div>
<div class="in" style="top:136px">Sheet Title Line 2</div>
<div class="lb" style="top:165.90px">ShtTitle Line 3:</div>
<div class="in" style="top:163px">Sheet Title Line 3</div>
<div class="lb" style="top:192.90px">Sheet Scale:</div>
<div class="in" style="top:190px">Sheet Scale</div>
<div class="lb" style="top:219.90px">Consultant Name:</div>
<div class="in" style="top:217px">Consultant Name</div>
<div class="lb" style="top:246.90px">Consultant Addr 1:</div>
<div class="in" style="top:244px">Consultant Address 1</div>
<div class="lb" style="top:273.90px">Consultant Addr 2:</div>
<div class="in" style="top:271px">Consultant Address 2</div>
<div class="lb" style="top:300.90px">Drawn By:</div>
<div class="in" style="top:298px">Drawn By</div>
<div class="lb" style="top:327.90px">Reviewed By:</div>
<div class="in" style="top:325px">Reviewed By</div>
<div class="lb" style="top:354.90px">Submitted By:</div>
<div class="in" style="top:352px">Submitted By</div>
<div class="lb" style="top:381.90px">Checked By:</div>
<div class="in" style="top:379px">Checked By</div>
<div class="lb" style="top:408.90px">Date:</div>
<div class="in" style="top:406px">00/00/00</div>
<div class="btn b1">Cancel</div><div class="btn b2">OK</div>
</div>
<div class="ap">
<div class="atb"><svg width="107" height="14" style="position:absolute;left:0;top:0"><g stroke="#9b9b9b" stroke-width="1.3" fill="none"><path d="M4.6 3.6 L10.6 10.4 M10.6 3.6 L4.6 10.4"/><path d="M16.2 7 H22.4"/></g></svg><span>Attributes</span></div>
<svg class="ic" style="left:6.4px;top:19.8px" width="14" height="14" viewBox="0 0 14 14"><defs><linearGradient id="bk" x1="0" y1="0" x2="1" y2="1"><stop offset="0" stop-color="#fff"/><stop offset="1" stop-color="#bdbdbd"/></linearGradient></defs><circle cx="5.6" cy="7.8" r="4.3" fill="url(#bk)" stroke="#555" stroke-width="0.9"/><path d="M2.6 5.4 L8 3.2 L9.4 7.2" fill="none" stroke="#8a8a8a" stroke-width="0.8"/><path d="M3.1 3.6 C5.4 0.6 10.6 1 12 5 L12.7 12.6" fill="none" stroke="#3a3a3a" stroke-width="1.5"/></svg>
<div class="dd" style="top:20px"><i class="cb"><svg width="12" height="12" viewBox="0 0 12 12"><path d="M10.2 2.4 L10.2 7.6 L8.5 5.9 C6.6 5.5 5 6.6 4.4 9.6 C2.8 6.6 3.8 3.6 6.6 4.1 L5 2.4 Z" fill="#111"/></svg></i><b>Cla...</b><svg class="ch" width="7" height="11" viewBox="0 0 7 11"><path d="M0.8 4 L3.5 1.2 L6.2 4 M0.8 7 L3.5 9.8 L6.2 7" fill="none" stroke="#333" stroke-width="1.1"/></svg></div>
<svg class="ic" style="left:7px;top:74.5px" width="14" height="14" viewBox="0 0 14 14"><path d="M2.2 10.6 L3.4 7.4 L9.6 1.6 L11.6 3.4 L5.4 9.4 Z" fill="#d9d9f2" stroke="#555" stroke-width="0.8"/><path d="M9.6 1.6 L11.6 3.4 L10.6 4.4 L8.6 2.6Z" fill="#e06060"/><path d="M0.6 12.8 H13" stroke="#222" stroke-width="1.2"/></svg>
<div class="dd" style="top:73.7px"><i class="cb"><svg width="12" height="12" viewBox="0 0 12 12"><path d="M10.2 2.4 L10.2 7.6 L8.5 5.9 C6.6 5.5 5 6.6 4.4 9.6 C2.8 6.6 3.8 3.6 6.6 4.1 L5 2.4 Z" fill="#111"/></svg></i><b>Cla...</b><svg class="ch" width="7" height="11" viewBox="0 0 7 11"><path d="M0.8 4 L3.5 1.2 L6.2 4 M0.8 7 L3.5 9.8 L6.2 7" fill="none" stroke="#333" stroke-width="1.1"/></svg></div>
<div class="blk"><svg width="12" height="12" viewBox="0 0 12 12" style="position:absolute;left:37.6px;top:7px"><path d="M10.2 2.4 L10.2 7.6 L8.5 5.9 C6.6 5.5 5 6.6 4.4 9.6 C2.8 6.6 3.8 3.6 6.6 4.1 L5 2.4 Z" fill="none" stroke="#a8a8a8" stroke-width="0.8" transform="translate(-1.0,-3.6) scale(1.0,1.38)"/></svg></div>
<div class="pct"><svg width="8" height="9" viewBox="0 0 8 9" style="position:absolute;left:5.4px;top:1.6px"><path d="M10.2 2.4 L10.2 7.6 L8.5 5.9 C6.6 5.5 5 6.6 4.4 9.6 C2.8 6.6 3.8 3.6 6.6 4.1 L5 2.4 Z" fill="#111" transform="translate(-1.4,-0.6) scale(0.78)"/></svg><span>100%/100%</span></div>
<div class="ds">Drop Sh...</div>
<div class="dsb"><i></i><u></u><b>...</b></div>
<div class="lw"><i></i><b>0.70</b><svg class="ch2" width="6" height="10" viewBox="0 0 6 10"><path d="M0.6 3.6 L3 1.1 L5.4 3.6 M0.6 6.4 L3 8.9 L5.4 6.4" fill="none" stroke="#333" stroke-width="1"/></svg></div>
<div class="bb" style="left:4.6px;top:197.3px;width:13.4px;height:15px;border-color:#cdcdcd"><svg width="6" height="4" viewBox="0 0 6 4" style="position:absolute;left:3.8px;top:6px"><path d="M0 0 H6 L3 3.4Z" fill="#9a9a9a"/></svg></div>
<div class="bb" style="left:40.1px;top:198.9px;width:24.9px;height:13.6px;border-color:#b4b4b4;background:linear-gradient(#fff,#e6e6e6)"><svg width="14" height="8" viewBox="0 0 14 8" style="position:absolute;left:5.6px;top:2.8px"><rect x="0.8" y="1.2" width="6.6" height="5.2" rx="2.4" fill="none" stroke="#222" stroke-width="1.5"/><rect x="6.6" y="1.2" width="6.6" height="5.2" rx="2.4" fill="none" stroke="#222" stroke-width="1.5"/></svg></div>
<div class="bb" style="left:86.7px;top:197.3px;width:13.4px;height:15px;border-color:#cdcdcd"><svg width="6" height="4" viewBox="0 0 6 4" style="position:absolute;left:3.8px;top:6px"><path d="M0 0 H6 L3 3.4Z" fill="#9a9a9a"/></svg></div>
<div class="sep"></div>
<div class="sb"><svg width="6" height="4" viewBox="0 0 6 4" style="position:absolute;left:5px;top:1.6px"><path d="M0 0 H6 L3 3.4Z" fill="#111"/></svg></div>
</div>

</body></html>
